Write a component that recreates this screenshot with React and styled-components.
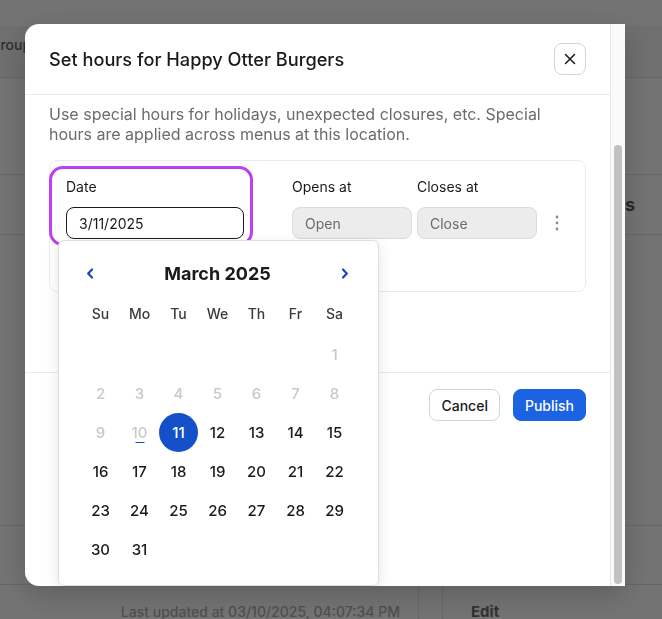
import React from 'react'
import styled, { createGlobalStyle } from 'styled-components'

const weekdays = ['Su', 'Mo', 'Tu', 'We', 'Th', 'Fr', 'Sa']
const weeks = [
  [null, null, null, null, null, null, 1],
  [2, 3, 4, 5, 6, 7, 8],
  [9, 10, 11, 12, 13, 14, 15],
  [16, 17, 18, 19, 20, 21, 22],
  [23, 24, 25, 26, 27, 28, 29],
  [30, 31, null, null, null, null, null],
]
const today = 10
const selected = 11

const App = () => {
  return (
    <>
      <GlobalStyle />
      <Page>
        <TopStrip />
        <TableHead>
          <HeadLabel>Group</HeadLabel>
        </TableHead>
        <Row $h={97} />
        <Row $h={60}>
          <SectionTitle>Special hours</SectionTitle>
        </Row>
        <Row $h={291} />
        <Row $h={59} />
        <BottomRow>
          <UpdatedCell>Last updated at 03/10/2025, 04:07:34 PM</UpdatedCell>
          <DividerCell />
          <EditCell>Edit</EditCell>
        </BottomRow>
      </Page>

      <Overlay>
        <Modal>
          <ModalMain>
            <Header>
              <Title>Set hours for Happy Otter Burgers</Title>
              <CloseButton aria-label="Close">
                <svg width="12" height="12" viewBox="0 0 12 12">
                  <path d="M1.5 1.5 L10.5 10.5 M10.5 1.5 L1.5 10.5" stroke="#1a1a1a" strokeWidth="1.5" strokeLinecap="round" />
                </svg>
              </CloseButton>
            </Header>

            <Body>
              <Description>
                Use special hours for holidays, unexpected closures, etc. Special
                <br />
                hours are applied across menus at this location.
              </Description>

              <Card>
                <DateCell>
                  <Label>Date</Label>
                  <DateField>
                    <DateInput readOnly value="3/11/2025" />
                    <Calendar>
                      <CalHeader>
                        <NavButton aria-label="Previous month">
                          <svg width="8" height="11" viewBox="0 0 8 11">
                            <path d="M6 1.5 L2.2 5.5 L6 9.5" fill="none" stroke="#1a47b8" strokeWidth="2.2" strokeLinecap="round" strokeLinejoin="round" />
                          </svg>
                        </NavButton>
                        <MonthTitle>March 2025</MonthTitle>
                        <NavButton aria-label="Next month">
                          <svg width="8" height="11" viewBox="0 0 8 11">
                            <path d="M2 1.5 L5.8 5.5 L2 9.5" fill="none" stroke="#1a47b8" strokeWidth="2.2" strokeLinecap="round" strokeLinejoin="round" />
                          </svg>
                        </NavButton>
                      </CalHeader>
                      <WeekRow>
                        {weekdays.map((d) => (
                          <WeekdayCell key={d}>{d}</WeekdayCell>
                        ))}
                      </WeekRow>
                      <DaysGrid>
                        {weeks.flat().map((d, i) =>
                          d ? (
                            <DayCell
                              key={i}
                              $muted={d <= today}
                              $today={d === today}
                              $selected={d === selected}
                            >
                              {d}
                            </DayCell>
                          ) : (
                            <span key={i} />
                          )
                        )}
                      </DaysGrid>
                    </Calendar>
                  </DateField>
                </DateCell>

                <TimeCol $ml={39}>
                  <Label>Opens at</Label>
                  <TimeInput readOnly placeholder="Open" />
                </TimeCol>
                <TimeCol $ml={5}>
                  <Label>Closes at</Label>
                  <TimeInput readOnly placeholder="Close" />
                </TimeCol>
                <KebabButton aria-label="More">
                  <svg width="4" height="16" viewBox="0 0 4 16">
                    <circle cx="2" cy="2" r="1.4" fill="#8a8a8a" />
                    <circle cx="2" cy="8" r="1.4" fill="#8a8a8a" />
                    <circle cx="2" cy="14" r="1.4" fill="#8a8a8a" />
                  </svg>
                </KebabButton>
              </Card>
            </Body>

            <Footer>
              <GhostButton>Cancel</GhostButton>
              <PrimaryButton>Publish</PrimaryButton>
            </Footer>
          </ModalMain>

          <ScrollTrack>
            <ScrollThumb />
          </ScrollTrack>
        </Modal>
      </Overlay>
    </>
  )
}

export default App

const GlobalStyle = createGlobalStyle`
  html, body {
    margin: 0;
    padding: 0;
  }
  body {
    font-family: Inter, "Noto Sans", sans-serif;
    color: #1a1a1a;
    overflow: hidden;
  }
  * {
    box-sizing: border-box;
  }
`

/* page behind the dialog */

const Page = styled.div`
  width: 100vw;
  height: 100vh;
  background: #fff;
  overflow: hidden;
  display: flex;
  flex-direction: column;
`

const TopStrip = styled.div`
  height: 26px;
  flex: none;
`

const TableHead = styled.div`
  height: 52px;
  flex: none;
  background: #f6f6f6;
  border-bottom: 1px solid #e3e3e3;
  padding-top: 10px;
`

const HeadLabel = styled.span`
  display: block;
  margin-left: -10px;
  font-size: 14px;
  line-height: 18px;
  font-weight: 500;
  color: #666;
`

const Row = styled.div`
  height: ${(p) => p.$h}px;
  flex: none;
  border-bottom: 1px solid #e3e3e3;
  display: flex;
  align-items: center;
  justify-content: flex-end;
  padding-right: 27px;
`

const SectionTitle = styled.span`
  font-size: 18px;
  font-weight: 700;
  color: #5a5a5a;
`

const BottomRow = styled.div`
  flex: 1;
  display: flex;
`

const UpdatedCell = styled.div`
  width: 418px;
  padding: 18px 18px 0 0;
  text-align: right;
  font-size: 14px;
  line-height: 18px;
  font-weight: 500;
  color: #b0b0b0;
`

const DividerCell = styled.div`
  width: 25px;
  border-left: 1px solid #e3e3e3;
  border-right: 1px solid #e3e3e3;
`

const EditCell = styled.div`
  padding: 18px 0 0 28px;
  font-size: 15px;
  line-height: 18px;
  font-weight: 700;
  color: #6e6e6e;
`

/* dialog */

const Overlay = styled.div`
  position: fixed;
  inset: 0;
  background: rgba(0, 0, 0, 0.55);
  display: flex;
  align-items: flex-start;
  padding: 24px 0 0 25px;
`

const Modal = styled.div`
  width: 600px;
  height: 562px;
  display: flex;
  background: #fff;
  border-radius: 14px 0 0 14px;
  overflow: hidden;
  box-shadow: 0 8px 30px rgba(0, 0, 0, 0.2);
`

const ModalMain = styled.div`
  flex: 1;
  min-width: 0;
  display: flex;
  flex-direction: column;
`

const Header = styled.div`
  flex: none;
  height: 71px;
  padding: 0 24px;
  border-bottom: 1px solid #ebebeb;
  display: flex;
  align-items: center;
  justify-content: space-between;
`

const Title = styled.h2`
  margin: 0;
  font-size: 18.2px;
  font-weight: 500;
  color: #1a1a1a;
`

const CloseButton = styled.button`
  width: 32px;
  height: 32px;
  padding: 0;
  border: 1px solid #d4d4d4;
  border-radius: 8px;
  background: #fff;
  display: grid;
  place-items: center;
  cursor: pointer;
`

const Body = styled.div`
  flex: none;
  padding: 9px 24px 0;
`

const Description = styled.p`
  margin: 0;
  font-size: 16px;
  line-height: 20px;
  color: #6b6b6b;
`

const Card = styled.div`
  margin-top: 16px;
  height: 132px;
  border: 1px solid #ebebeb;
  border-radius: 8px;
  padding-top: 5px;
  display: flex;
  align-items: flex-start;
`

const DateCell = styled.div`
  width: 204px;
  margin-left: -1px;
  border: 3px solid #bd3ff1;
  border-radius: 14px;
  padding: 9px 6px 4px 14px;
  display: flex;
  flex-direction: column;
  gap: 11px;
`

const Label = styled.span`
  font-size: 14px;
  line-height: 18px;
  color: #1a1a1a;
`

const DateField = styled.div`
  position: relative;
`

const DateInput = styled.input`
  display: block;
  width: 100%;
  height: 32px;
  border: 1px solid #1a1a1a;
  border-radius: 8px;
  padding: 0 12px;
  font-family: inherit;
  font-size: 14px;
  color: #1a1a1a;
  background: #fff;
  outline: none;
`

const TimeCol = styled.div`
  width: 120px;
  margin-left: ${(p) => p.$ml}px;
  padding-top: 12px;
  display: flex;
  flex-direction: column;
  gap: 11px;
`

const TimeInput = styled.input`
  display: block;
  width: 100%;
  height: 32px;
  border: 1px solid #dadada;
  border-radius: 8px;
  padding: 0 12px;
  font-family: inherit;
  font-size: 14px;
  background: #ececec;
  outline: none;

  &::placeholder {
    color: #6b6b6b;
  }
`

const KebabButton = styled.button`
  width: 20px;
  height: 32px;
  margin: 41px 0 0 10px;
  padding: 0;
  border: 0;
  background: none;
  display: grid;
  place-items: center;
`

/* calendar popover */

const Calendar = styled.div`
  position: absolute;
  left: -8px;
  top: calc(100% + 1px);
  width: 321px;
  height: 346px;
  padding-top: 14px;
  background: #fff;
  border: 1px solid #dedede;
  border-radius: 6px;
  box-shadow: 0 4px 14px rgba(0, 0, 0, 0.1);
  z-index: 5;
`

const CalHeader = styled.div`
  height: 36px;
  padding: 0 25px 0 23px;
  display: flex;
  align-items: center;
  justify-content: space-between;
`

const NavButton = styled.button`
  width: 16px;
  height: 16px;
  padding: 0;
  border: 0;
  background: none;
  display: grid;
  place-items: center;
`

const MonthTitle = styled.span`
  font-size: 18px;
  font-weight: 700;
  color: #1a1a1a;
`

const WeekRow = styled.div`
  margin: 3px 0 2px;
  padding-left: 22px;
  display: grid;
  grid-template-columns: repeat(7, 39px);
`

const WeekdayCell = styled.span`
  height: 39px;
  display: flex;
  align-items: center;
  justify-content: center;
  font-size: 14px;
  font-weight: 500;
  color: #3b3b3b;
`

const DaysGrid = styled.div`
  padding-left: 22px;
  display: grid;
  grid-template-columns: repeat(7, 39px);
  grid-auto-rows: 39px;
`

const DayCell = styled.span`
  position: relative;
  width: 39px;
  height: 39px;
  border-radius: 50%;
  display: flex;
  align-items: center;
  justify-content: center;
  font-size: 15px;
  font-weight: 500;
  color: ${(p) => (p.$selected ? '#fff' : p.$muted ? '#c9c9c9' : '#1a1a1a')};
  background: ${(p) => (p.$selected ? '#1451c9' : 'transparent')};

  &::after {
    content: '';
    display: ${(p) => (p.$today ? 'block' : 'none')};
    position: absolute;
    left: 50%;
    bottom: 9px;
    width: 9px;
    height: 1.5px;
    transform: translateX(-50%);
    background: #1451c9;
  }
`

/* footer */

const Footer = styled.div`
  flex: none;
  margin-top: 80px;
  border-top: 1px solid #ebebeb;
  padding: 16px 24px 0;
  display: flex;
  justify-content: flex-end;
  gap: 13px;
`

const GhostButton = styled.button`
  height: 32px;
  padding: 0 11px;
  border: 1px solid #d4d4d4;
  border-radius: 8px;
  background: #fff;
  font-family: inherit;
  font-size: 14px;
  font-weight: 500;
  color: #1a1a1a;
`

const PrimaryButton = styled(GhostButton)`
  border-color: #1b63e3;
  background: #1b63e3;
  color: #fff;
`

const ScrollTrack = styled.div`
  flex: none;
  width: 15px;
  background: #fafafa;
  border-left: 1px solid #e8e8e8;
  padding: 0 3px 2px;
  display: flex;
  flex-direction: column;
  justify-content: flex-end;
`

const ScrollThumb = styled.div`
  height: 439px;
  border-radius: 4px;
  background: #c1c1c1;
`
